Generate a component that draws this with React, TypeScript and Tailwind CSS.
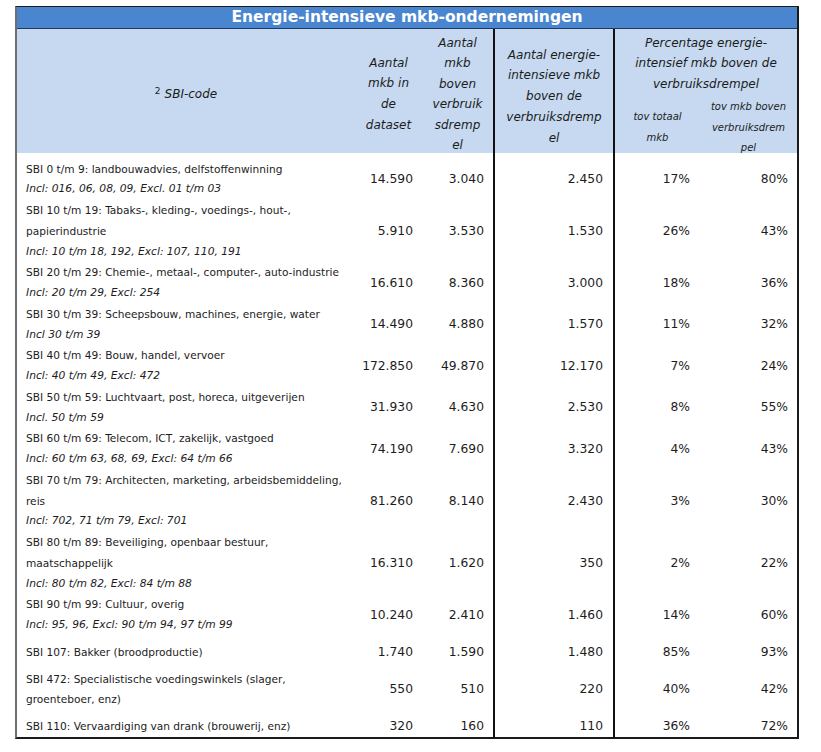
import React from "react";

type Row = {
  lines: string[];
  incl?: string;
  v: [string, string, string, string, string];
  pad: string;
};

const rows: Row[] = [
  { lines: ["SBI 0 t/m 9: landbouwadvies, delfstoffenwinning"], incl: "Incl: 016, 06, 08, 09, Excl. 01 t/m 03", v: ["14.590", "3.040", "2.450", "17%", "80%"], pad: "pt-[5.6px]" },
  { lines: ["SBI 10 t/m 19: Tabaks-, kleding-, voedings-, hout-,", "papierindustrie"], incl: "Incl: 10 t/m 18, 192, Excl: 107, 110, 191", v: ["5.910", "3.530", "1.530", "26%", "43%"], pad: "pt-0" },
  { lines: ["SBI 20 t/m 29: Chemie-, metaal-, computer-, auto-industrie"], incl: "Incl: 20 t/m 29, Excl: 254", v: ["16.610", "8.360", "3.000", "18%", "36%"], pad: "pt-0" },
  { lines: ["SBI 30 t/m 39: Scheepsbouw, machines, energie, water"], incl: "Incl 30 t/m 39", v: ["14.490", "4.880", "1.570", "11%", "32%"], pad: "pt-0" },
  { lines: ["SBI 40 t/m 49: Bouw, handel, vervoer"], incl: "Incl: 40 t/m 49, Excl: 472", v: ["172.850", "49.870", "12.170", "7%", "24%"], pad: "pt-0" },
  { lines: ["SBI 50 t/m 59: Luchtvaart, post, horeca, uitgeverijen"], incl: "Incl. 50 t/m 59", v: ["31.930", "4.630", "2.530", "8%", "55%"], pad: "pt-0" },
  { lines: ["SBI 60 t/m 69: Telecom, ICT, zakelijk, vastgoed"], incl: "Incl: 60 t/m 63, 68, 69, Excl: 64 t/m 66", v: ["74.190", "7.690", "3.320", "4%", "43%"], pad: "pt-0" },
  { lines: ["SBI 70 t/m 79: Architecten, marketing, arbeidsbemiddeling,", "reis"], incl: "Incl: 702, 71 t/m 79, Excl: 701", v: ["81.260", "8.140", "2.430", "3%", "30%"], pad: "pt-0" },
  { lines: ["SBI 80 t/m 89: Beveiliging, openbaar bestuur,", "maatschappelijk"], incl: "Incl: 80 t/m 82, Excl: 84 t/m 88", v: ["16.310", "1.620", "350", "2%", "22%"], pad: "pt-0" },
  { lines: ["SBI 90 t/m 99: Cultuur, overig"], incl: "Incl: 95, 96, Excl: 90 t/m 94, 97 t/m 99", v: ["10.240", "2.410", "1.460", "14%", "60%"], pad: "pt-0" },
  { lines: ["SBI 107: Bakker (broodproductie)"], v: ["1.740", "1.590", "1.480", "85%", "93%"], pad: "pt-[6px]" },
  { lines: ["SBI 472: Specialistische voedingswinkels (slager,", "groenteboer, enz)"], v: ["550", "510", "220", "40%", "42%"], pad: "pt-[6px]" },
  { lines: ["SBI 110: Vervaardiging van drank (brouwerij, enz)"], v: ["320", "160", "110", "36%", "72%"], pad: "pt-[6px]" },
];

function BodyRow({ r }: { r: Row }) {
  const num = "flex items-center justify-end text-[12.3px] whitespace-nowrap";
  return (
    <div className="flex">
      <div className={`w-[338px] pl-[9px] ${r.pad}`}>
        {r.lines.map((l, i) => (
          <div key={i} className="whitespace-nowrap text-[10.6px]">{l}</div>
        ))}
        {r.incl && <div className="whitespace-nowrap italic text-[10.7px]">{r.incl}</div>}
      </div>
      <div className={`w-[67px] pr-[9px] ${num} ${r.pad}`}>{r.v[0]}</div>
      <div className={`w-[73px] pr-[9px] border-r-2 border-[#111] ${num} ${r.pad}`}>{r.v[1]}</div>
      <div className={`w-[120px] pr-[10px] border-r-2 border-[#111] ${num} ${r.pad}`}>{r.v[2]}</div>
      <div className={`w-[85px] pr-[10px] ${num} ${r.pad}`}>{r.v[3]}</div>
      <div className={`w-[97px] pr-[9px] ${num} ${r.pad}`}>{r.v[4]}</div>
    </div>
  );
}

export default function App() {
  return (
    <div className="w-[821px] h-[752px] bg-white pt-[6px] pl-[15px] font-['DejaVu_Sans','Verdana',sans-serif] text-[#1c1c1c] leading-[20.75px]">
      <div className="w-[784px] border-t border-r-2 border-b-2 border-[#1a1a1a] border-l-2 border-l-[#6e6e6e]">
        <div className="h-[22px] bg-[#4a86d0] border-b border-[#1d3a62] flex items-center justify-center text-white font-bold text-[15.5px] leading-none">
          Energie-intensieve mkb-ondernemingen
        </div>
        <div className="flex h-[124px] bg-[#c6d9f0] italic text-[12px] text-center">
          <div className="w-[338px] pt-[51.6px] whitespace-nowrap">
            <span className="not-italic text-[9px] align-[4px] mr-[4px]">2</span>SBI-code
          </div>
          <div className="w-[67px] pt-[23.6px] whitespace-nowrap">
            Aantal<br />mkb in<br />de<br />dataset
          </div>
          <div className="w-[73px] pt-[3.6px] border-r-2 border-[#111] whitespace-nowrap leading-[20.5px]">
            Aantal<br />mkb<br />boven<br />verbruik<br />sdremp<br />el
          </div>
          <div className="w-[120px] pt-[15.6px] border-r-2 border-[#111] whitespace-nowrap">
            Aantal energie-<br />intensieve mkb<br />boven de<br />verbruiksdremp<br />el
          </div>
          <div className="w-[182px] pt-[3.6px] flex flex-col whitespace-nowrap">
            <div>
              Percentage energie-<br />intensief mkb boven de<br />verbruiksdrempel
            </div>
            <div className="flex text-[10px]">
              <div className="w-[85px] pt-[12.2px]">
                tov totaal<br />mkb
              </div>
              <div className="w-[97px] pt-[2.4px] leading-[20.3px]">
                tov mkb boven<br />verbruiksdrem<br />pel
              </div>
            </div>
          </div>
        </div>
        {rows.map((r, i) => (
          <BodyRow key={i} r={r} />
        ))}
      </div>
    </div>
  );
}
